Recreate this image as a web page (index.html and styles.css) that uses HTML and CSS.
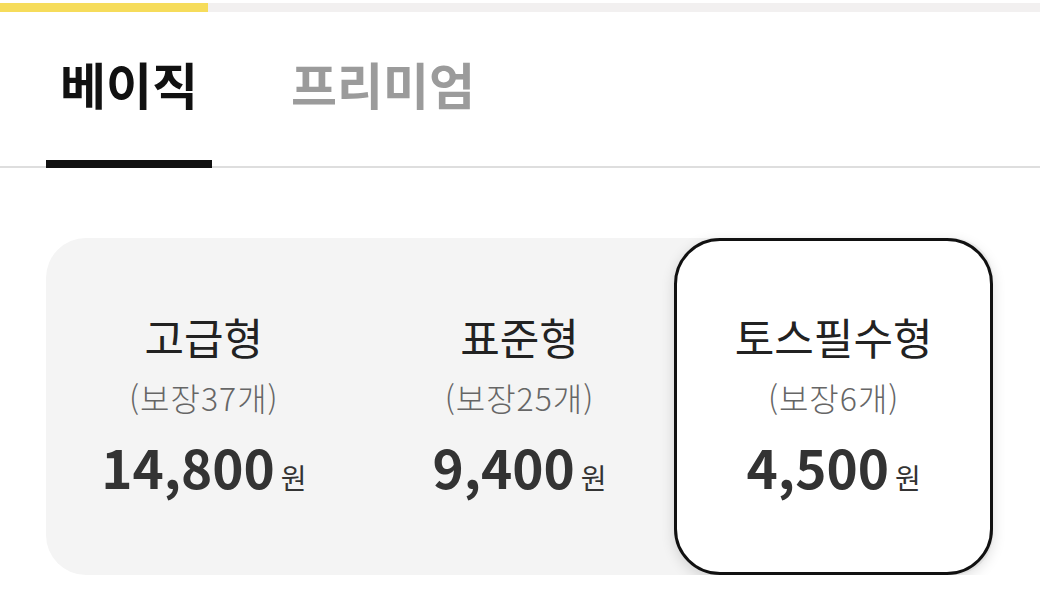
FILE: index.html
```html
<!DOCTYPE html>
<html lang="ko">

<head>
	<meta charset="utf-8">
	<title>보험 플랜 선택</title>
	<link rel="stylesheet" href="styles.css">
</head>

<body>

	<div class="progress">
		<div class="progress-fill"></div>
	</div>

	<div class="tabs">
		<div class="tab active">베이직</div>
		<div class="tab">프리미엄</div>
	</div>

	<div class="content">
		<div class="plans">
			<div class="plan">
				<div class="plan-name">고급형</div>
				<div class="plan-count">(보장37개)</div>
				<div class="plan-price">14,800<span class="won">원</span></div>
			</div>
			<div class="plan">
				<div class="plan-name">표준형</div>
				<div class="plan-count">(보장25개)</div>
				<div class="plan-price">9,400<span class="won">원</span></div>
			</div>
			<div class="plan selected">
				<div class="plan-name">토스필수형</div>
				<div class="plan-count">(보장6개)</div>
				<div class="plan-price">4,500<span class="won">원</span></div>
			</div>
		</div>
	</div>

</body>

</html>
```

FILE: styles.css
```css
:root {
	--yellow: #f6dc5b;
	--track: #f2f0f0;
	--panel: #f4f4f4;
	--line: #dedede;
	--text: #222222;
	--muted: #666666;
}
body { margin: 0; background: #ffffff; font-family: "Noto Sans CJK KR", "Noto Sans", sans-serif; color: var(--text);}

.progress {
	margin-top: 3px;
	height: 9px;
	background: var(--track);
}
.progress-fill {
	width: 208px;
	height: 100%;
	background: var(--yellow);
}

.tabs {
	display: flex;
	gap: 65px;
	padding-left: 46px;
	border-bottom: 2px solid var(--line);
}
.tab {
	padding: 41px 14px 47px;
	margin-bottom: -2px;
	border-bottom: 8px solid transparent;
	font-size: 50px;
	line-height: 60px;
	font-weight: 700;
	color: #9b9b9b;
}
.tab.active { color: #111111; border-bottom-color: #111111;}

.content { padding: 70px 47px 0 46px;}

.plans {
	display: grid;
	grid-template-columns: repeat(3, 1fr);
	height: 337px;
	background: var(--panel);
	border-radius: 40px;
}
.plan {
	display: flex;
	flex-direction: column;
	align-items: center;
	justify-content: center;
	padding-bottom: 6px;
}
.plan.selected {
	margin-left: -3px;
	background: #ffffff;
	border: 3px solid #111111;
	border-radius: 46px;
	box-shadow: 0 4px 14px rgba(0, 0, 0, 0.14);
}
.plan-name { font-size: 43px; line-height: 1.3; font-weight: 400; color: var(--text);}
.plan-count {
	margin-top: 10px;
	font-size: 32px;
	line-height: 1.4;
	font-weight: 300;
	letter-spacing: 1px;
	color: var(--muted);
}
.plan-price {
	margin-top: 15px;
	font-size: 53px;
	line-height: 1.2;
	font-weight: 700;
	color: #333333;
}
.won { margin-left: 6px; font-size: 28px; font-weight: 400;}
```
